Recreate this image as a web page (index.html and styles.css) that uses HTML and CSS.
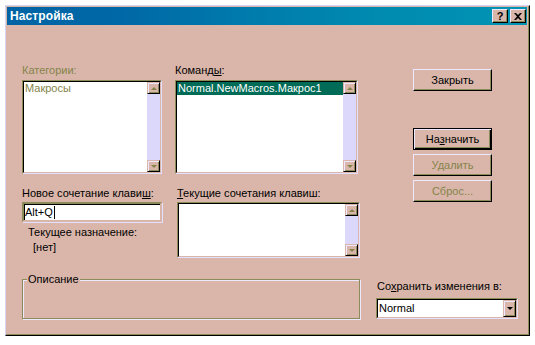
FILE: index.html
```html
<!DOCTYPE html>
<html lang="ru">
<head>
<meta charset="utf-8">
<title>Настройка</title>
<link rel="stylesheet" href="styles.css">
</head>
<body>
<div class="window">
  <div class="titlebar">
    <span class="title">Настройка</span>
    <div class="tbtns">
      <span class="tbtn help">?</span>
      <span class="tbtn close"><svg width="8" height="7" viewBox="0 0 8 7"><path d="M0 0h2l2 2 2-2h2L5 3.5 8 7H6L4 5 2 7H0l3-3.5z" fill="#000"/></svg></span>
    </div>
  </div>
  <div class="body">
    <div class="main">
      <div class="row1">
        <div class="col-a">
          <div class="label dis">Категории:</div>
          <div class="listbox tall">
            <div class="lb-inner">
              <div class="items"><div class="item dis">Макросы</div></div>
              <div class="vscroll">
                <span class="sbtn"><span class="arr up"></span></span>
                <span class="track"></span>
                <span class="sbtn"><span class="arr down"></span></span>
              </div>
            </div>
          </div>
        </div>
        <div class="col-b">
          <div class="label">Команд<u>ы</u>:</div>
          <div class="listbox tall">
            <div class="lb-inner">
              <div class="items"><div class="item sel">Normal.NewMacros.Макрос1</div></div>
              <div class="vscroll">
                <span class="sbtn"><span class="arr up"></span></span>
                <span class="track"></span>
                <span class="sbtn"><span class="arr down"></span></span>
              </div>
            </div>
          </div>
        </div>
      </div>
      <div class="row2">
        <div class="col-c">
          <div class="label">Новое сочетание клави<u>ш</u>:</div>
          <div class="input"><span class="val">Alt+Q</span><span class="caret"></span></div>
          <div class="label assign">Текущее назначение:</div>
          <div class="label none">[нет]</div>
        </div>
        <div class="col-d">
          <div class="label"><u>Т</u>екущие сочетания клавиш:</div>
          <div class="listbox short">
            <div class="lb-inner">
              <div class="items"></div>
              <div class="vscroll">
                <span class="sbtn"><span class="arr up"></span></span>
                <span class="track"></span>
                <span class="sbtn"><span class="arr down"></span></span>
              </div>
            </div>
          </div>
        </div>
      </div>
      <fieldset class="group">
        <legend>Описание</legend>
        <div class="group-body"></div>
      </fieldset>
    </div>
    <div class="side">
      <div class="btn first">Закрыть</div>
      <div class="btn default"><span class="bi">На<u>з</u>начить</span></div>
      <div class="btn dis">Удалить</div>
      <div class="btn dis">Сброс...</div>
      <div class="save">
        <div class="label">Со<u>х</u>ранить изменения в:</div>
        <div class="combo">
          <div class="combo-inner">
            <span class="cval">Normal</span>
            <span class="cbtn"><span class="carr"></span></span>
          </div>
        </div>
      </div>
    </div>
  </div>
</div>
</body>
</html>
```
FILE: styles.css
```css
* { box-sizing: border-box; }
body {
  margin: 0;
  background: #ffffff;
  font-family: "Liberation Sans", Arial, sans-serif;
  font-size: 11px;
  color: #000;
}
.window {
  margin: 5px 0 0 5px;
  width: 525px;
  height: 331px;
  background: #dab6aa;
  border: 1px solid;
  border-color: #d8d4f4 #000 #000 #d8d4f4;
  padding: 1px 2px 2px 1px;
  box-shadow: inset -1px -1px 0 #8c8c5a;
  display: flex;
  flex-direction: column;
}
.titlebar {
  height: 19px;
  display: flex;
  align-items: center;
  justify-content: space-between;
  background: linear-gradient(to right, #0064a4 0%, #0068a6 22%, #007aac 45%, #008ab0 70%, #0094b4 100%);
  padding: 0 1px 0 3px;
}
.title {
  color: #fff;
  font-weight: bold;
  font-size: 12px;
  letter-spacing: 0.1px;
}
.tbtns { display: flex; gap: 2px; }
.tbtn {
  width: 16px;
  height: 14px;
  background: #dab6aa;
  border: 1px solid;
  border-color: #ece8ff #000 #000 #ece8ff;
  box-shadow: inset -1px -1px 0 #8c8c5a;
  display: flex;
  align-items: center;
  justify-content: center;
  font-weight: bold;
  font-size: 11px;
  line-height: 1;
}
.tbtn svg { display: block; }
.body {
  flex: 1;
  display: flex;
  padding: 39px 9px 14px 15px;
}
.main {
  width: 338px;
  display: flex;
  flex-direction: column;
}
.label {
  height: 13px;
  line-height: 13px;
  white-space: nowrap;
}
.dis { color: #84844a; }
.row1 { display: flex; gap: 13px; }
.col-a { width: 140px; }
.col-b { width: 183px; }
.row1 .label { margin-bottom: 3px; }
.listbox {
  border: 1px solid;
  border-color: #8c8c5a #e4e0ff #e4e0ff #8c8c5a;
  background: #fff;
  display: flex;
}
.listbox.tall { height: 94px; }
.listbox.short { height: 56px; }
.lb-inner {
  flex: 1;
  display: flex;
  border: 1px solid;
  border-color: #000 #dab6aa #dab6aa #000;
}
.items { flex: 1; }
.item {
  height: 13px;
  line-height: 13px;
  padding-left: 1px;
  white-space: nowrap;
}
.item.sel { background: #006b56; color: #fff; }
.vscroll {
  width: 13px;
  display: flex;
  flex-direction: column;
  background: #dcd8fc;
}
.sbtn {
  height: 12px;
  background: #dab6aa;
  border: 1px solid;
  border-color: #dab6aa #000 #000 #dab6aa;
  box-shadow: inset 1px 1px 0 #ece8ff, inset -1px -1px 0 #8c8c5a;
  display: flex;
  align-items: center;
  justify-content: center;
}
.track { flex: 1; }
.arr { width: 0; height: 0; border-left: 3px solid transparent; border-right: 3px solid transparent; }
.arr.up { border-bottom: 3px solid #84844a; }
.arr.down { border-top: 3px solid #84844a; }
.row2 { display: flex; gap: 15px; margin-top: 13px; }
.col-c { width: 140px; }
.col-d { width: 183px; }
.row2 .label { margin-bottom: 2px; }
.input {
  height: 20px;
  background: #fff;
  border: 2px solid;
  border-color: #8c8c5a #dab6aa #dab6aa #8c8c5a;
  box-shadow: inset 1px 1px 0 #000, 1px 1px 0 #e4e0ff;
  display: flex;
  align-items: center;
  padding-left: 1px;
}
.caret { width: 1px; height: 13px; background: #000; margin-left: 1px; }
.label.assign { margin-top: 4px; padding-left: 6px; }
.label.none { margin-top: 2px; padding-left: 11px; }
.group {
  margin: 15px 0 0;
  padding: 0 2px;
  border: 1px solid #8c8c5a;
  box-shadow: inset 1px 1px 0 #ece8ff, 1px 1px 0 #ece8ff;
  min-width: 0;
}
.group legend {
  margin-left: 2px;
  padding: 0 1px;
  line-height: 13px;
  background: #dab6aa;
}
.group-body { height: 32px; }
.side {
  width: 142px;
  margin-left: 16px;
  display: flex;
  flex-direction: column;
  padding-top: 5px;
}
.btn {
  margin-left: 37px;
  width: 79px;
  height: 22px;
  background: #dab6aa;
  border: 1px solid;
  border-color: #ece8ff #000 #000 #ece8ff;
  box-shadow: inset -1px -1px 0 #8c8c5a;
  display: flex;
  align-items: center;
  justify-content: center;
  line-height: 13px;
}
.btn.default {
  margin-top: 37px;
  border: 1px solid #000;
  box-shadow: inset 1px 1px 0 #ece8ff, inset -1px -1px 0 #000, inset -2px -2px 0 #8c8c5a;
}
.btn.dis { margin-top: 4px; }
.save { margin-top: auto; }
.save .label { padding-left: 1px; margin-bottom: 5px; }
.combo {
  height: 21px;
  border: 1px solid;
  border-color: #8c8c5a #e4e0ff #e4e0ff #8c8c5a;
  display: flex;
}
.combo-inner {
  flex: 1;
  display: flex;
  background: #fff;
  border: 1px solid;
  border-color: #000 #dab6aa #dab6aa #000;
}
.cval { flex: 1; padding-left: 1px; line-height: 17px; }
.cbtn {
  width: 13px;
  background: #dab6aa;
  border: 1px solid;
  border-color: #dab6aa #000 #000 #dab6aa;
  box-shadow: inset 1px 1px 0 #ece8ff, inset -1px -1px 0 #8c8c5a;
  display: flex;
  align-items: center;
  justify-content: center;
}
.carr { width: 0; height: 0; border-left: 3px solid transparent; border-right: 3px solid transparent; border-top: 3px solid #000; }
```
